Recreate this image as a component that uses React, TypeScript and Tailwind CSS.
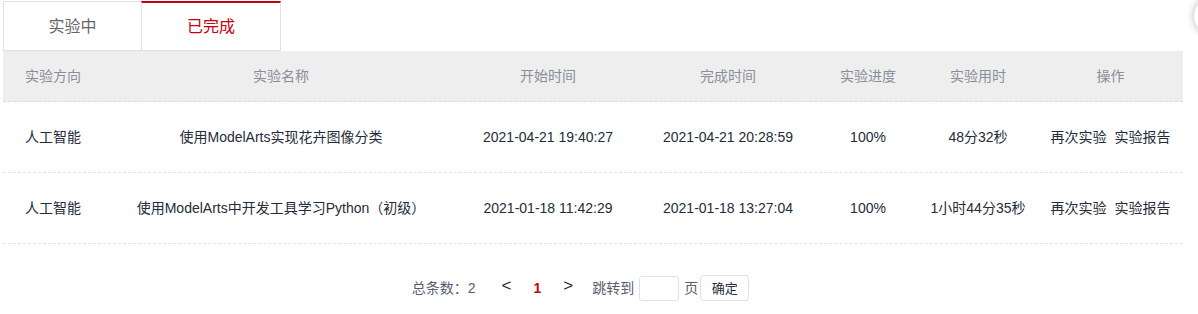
import React from "react";

const font = { fontFamily: '"Liberation Sans","Noto Sans CJK SC",sans-serif' };

const rows = [
  ["人工智能", "使用ModelArts实现花卉图像分类", "2021-04-21 19:40:27", "2021-04-21 20:28:59", "100%", "48分32秒"],
  ["人工智能", "使用ModelArts中开发工具学习Python（初级）", "2021-01-18 11:42:29", "2021-01-18 13:27:04", "100%", "1小时44分35秒"],
];

const cols = "grid grid-cols-[101px_354px_180px_180px_100px_120px_145px]";

export default function App() {
  return (
    <div className="relative w-[1198px] h-[314px] bg-white overflow-hidden" style={font}>
      <div className="absolute left-[1194px] top-[-2px] w-[36px] h-[36px] rounded-full bg-white shadow-[0_0_8px_rgba(0,0,0,0.3)]" />
      <div className="pl-[3px] pt-[1px] w-[1183px]">
        {/* Tabs */}
        <div className="flex h-[50px]">
          <div className="w-[138px] border border-[#dfe1e6] border-r-0 flex items-center justify-center pt-[2px] text-[16px] text-[#666666] leading-none">
            实验中
          </div>
          <div className="w-[140px] border border-[#dfe1e6] border-t-2 border-t-[#c7000b] flex items-center justify-center pt-[1px] text-[16px] text-[#c7000b] leading-none">
            已完成
          </div>
        </div>
        {/* Header */}
        <div className={`${cols} h-[51px] bg-[#eeeeee] border-b border-dashed border-[#dddddd] text-[14px] text-[#8a8e99] items-center leading-none`}>
          <div className="pl-[22px]">实验方向</div>
          <div className="text-center">实验名称</div>
          <div className="text-center">开始时间</div>
          <div className="text-center">完成时间</div>
          <div className="text-center">实验进度</div>
          <div className="text-center">实验用时</div>
          <div className="text-center">操作</div>
        </div>
        {rows.map((r, i) => (
          <div
            key={i}
            className={`${cols} h-[71px] border-b border-dashed border-[#e3e3e3] text-[14px] text-[#252b3a] items-center leading-none`}
          >
            <div className="pl-[22px]">{r[0]}</div>
            <div className="text-center whitespace-nowrap">{r[1]}</div>
            <div className="text-center">{r[2]}</div>
            <div className="text-center">{r[3]}</div>
            <div className="text-center">{r[4]}</div>
            <div className="text-center whitespace-nowrap">{r[5]}</div>
            <div className="flex justify-center gap-[8px]">
              <span>再次实验</span>
              <span>实验报告</span>
            </div>
          </div>
        ))}
        {/* Pagination */}
        <div className="flex justify-center items-center pr-[25px] mt-[31px] text-[14px] leading-none">
          <span className="text-[#575d6c]">总条数：2</span>
          <span className="ml-[26px] text-[17px] text-[#252b3a] -translate-y-[3px]">&lt;</span>
          <span className="ml-[22px] text-[#c7000b] font-bold">1</span>
          <span className="ml-[22px] text-[17px] text-[#252b3a] -translate-y-[3px]">&gt;</span>
          <span className="ml-[19px] text-[#575d6c]">跳转到</span>
          <span className="ml-[5px] w-[40px] h-[25px] border border-[#dfe1e6] rounded-[3px]" />
          <span className="ml-[5px] text-[#575d6c]">页</span>
          <span className="ml-[2px] w-[49px] h-[26px] border border-[#dfe1e6] rounded-[3px] flex items-center justify-center text-[13px] text-[#252b3a]">
            确定
          </span>
        </div>
      </div>
    </div>
  );
}
